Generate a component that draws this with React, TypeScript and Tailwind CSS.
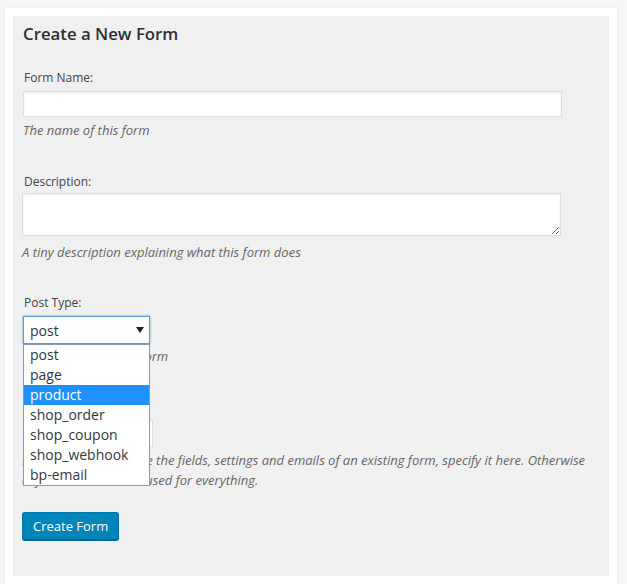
import React from "react";

const font = { fontFamily: '"Open Sans", "Noto Sans", sans-serif' };

const options = ["post", "page", "product", "shop_order", "shop_coupon", "shop_webhook", "bp-email"];

export default function App() {
  return (
    <div className="min-h-[584px] bg-[#f6f6f6] pt-[8px] pl-[5px]" style={font}>
      <div className="w-[612px] bg-white p-[8px] pb-[8px] shadow-[0_0_6px_rgba(0,0,0,0.06)]">
        <div className="bg-[#f0f0f0] px-[10px] pt-[6px] pb-[36px]">
          <h2 className="h-[24px] text-[16.8px] leading-[24px] font-semibold text-[#2b3035]">Create a New Form</h2>

          {/* Form name */}
          <label className="mt-[22px] block h-[20px] pl-[1px] text-[12px] leading-[20px] text-[#444]">Form Name:</label>
          <input
            type="text"
            className="mt-[3px] block h-[26px] w-[539px] border border-[#ddd] bg-white shadow-[inset_0_1px_2px_rgba(0,0,0,0.07)] outline-none"
          />
          <p className="mt-[3px] h-[20px] text-[13px] leading-[20px] italic text-[#666]">The name of this form</p>

          {/* Description */}
          <label className="mt-[32px] block h-[20px] pl-[1px] text-[12px] leading-[20px] text-[#444]">Description:</label>
          <textarea className="-ml-[1px] mt-[1px] block h-[43px] w-[539px] border border-[#ddd] bg-white shadow-[inset_0_1px_2px_rgba(0,0,0,0.07)] outline-none" />
          <p className="mt-[6px] h-[20px] -ml-[1px] text-[13px] leading-[20px] italic text-[#666]">A tiny description explaining what this form does</p>

          {/* Post type */}
          <label className="mt-[31px] block h-[20px] pl-[1px] text-[12px] leading-[20px] text-[#444]">Post Type:</label>
          <div className="relative mt-[3px] h-[28px] w-[127px]">
            <div className="flex h-[28px] w-[127px] items-center justify-between border border-[#5b9dd9] bg-white pl-[6px] pr-[5px] text-[14px] text-[#32373c] shadow-[0_0_2px_rgba(30,140,190,0.8)]">
              <span>post</span>
              <svg width="8" height="6" viewBox="0 0 8 6">
                <path d="M0 0H8L4 6Z" fill="#222" />
              </svg>
            </div>
            <ul className="absolute left-0 top-[28px] z-10 w-[127px] border border-[#7f9db9] bg-white text-[14px] leading-[20px] text-[#32373c]">
              {options.map((o) => (
                <li
                  key={o}
                  className={
                    o === "product"
                      ? "h-[20px] bg-[#1e90ff] pl-[6px] text-white"
                      : "h-[20px] pl-[6px]"
                  }
                >
                  {o}
                </li>
              ))}
            </ul>
          </div>
          <p className="mt-[2px] h-[20px] -ml-[1px] text-[13px] leading-[20px] italic text-[#666]">The post type of this form</p>

          {/* Duplicate */}
          <label className="mt-[31px] block h-[20px] pl-[1px] text-[12px] leading-[20px] text-[#444]">Duplicate Form:</label>
          <input
            type="text"
            className="mt-[3px] block h-[27px] w-[130px] border border-[#ddd] bg-white outline-none"
          />
          <p className="mt-[3px] -ml-[1px] text-[13px] leading-[20px] italic text-[#666]">
            If you would like to use the fields, settings and emails of an existing form, specify it here. Otherwise
            <br />
            default values will be used for everything.
          </p>

          <button className="-ml-[1px] mt-[22px] h-[28px] rounded-[3px] border border-[#0073aa] border-b-[#006799] bg-[#0085ba] px-[10px] text-[13px] leading-[26px] text-white shadow-[0_1px_0_#006799]">
            Create Form
          </button>
        </div>
      </div>
    </div>
  );
}
